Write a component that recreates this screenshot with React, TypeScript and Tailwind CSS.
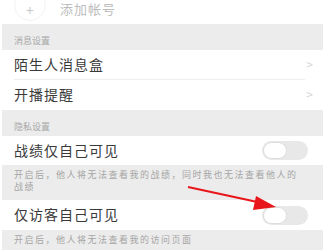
import React from 'react';

const font = { fontFamily: '"Noto Sans CJK SC", "Noto Sans", sans-serif' };

function SectionHeader({ title }: { title: string }) {
  return (
    <div className="mx-[2px] h-[26px] bg-[#ececec] flex items-end pb-[5px] pl-[12px]">
      <span className="text-[9px] leading-none text-[#a8a8a8]">{title}</span>
    </div>
  );
}

function LinkRow({ label, divider }: { label: string; divider?: boolean }) {
  return (
    <div className="h-[30px] flex items-center pl-[14px] pr-[12px] pb-[3px] relative">
      <span className="text-[14px] leading-none text-[#3a3a3a] tracking-[1px]">{label}</span>
      <span className="ml-auto text-[12px] leading-none text-[#d6d6d6]">&gt;</span>
      {divider && <div className="absolute left-[14px] right-[20px] bottom-0 h-px bg-[#eeeeee]" />}
    </div>
  );
}

function Toggle() {
  return (
    <div className="w-[46px] h-[19px] rounded-full bg-[#e8e8e8] flex items-center p-[1px]">
      <div className="w-[24px] h-[17px] rounded-full bg-white border border-[#dcdcdc]" />
    </div>
  );
}

function ToggleRow({ label, h }: { label: string; h: string }) {
  return (
    <div className={`${h} flex items-center pl-[14px] pr-[17px]`}>
      <span className="text-[14px] leading-none text-[#3a3a3a] tracking-[1px] -mt-[2px]">{label}</span>
      <div className="ml-auto">
        <Toggle />
      </div>
    </div>
  );
}

function Note({ children }: { children: React.ReactNode }) {
  return (
    <div className="mx-[2px] bg-[#ececec] pl-[12px] pr-[14px] pt-[4px] pb-[7px] text-[9px] leading-[12px] tracking-[1.5px] text-[#a5a5a5]">
      {children}
    </div>
  );
}

export default function App() {
  return (
    <div className="w-[325px] h-[250px] bg-white overflow-hidden relative" style={font}>
      {/* add account */}
      <div className="h-[24px] flex items-center pl-[14px]">
        <div className="w-[32px] h-[32px] -mt-[14px] rounded-full border border-[#f3f3f3] flex items-center justify-center pt-[10px]">
          <span className="text-[14px] text-[#c8c8c8] leading-none">+</span>
        </div>
        <span className="ml-[14px] -mt-[7px] text-[13px] leading-none text-[#bdbdbd] tracking-[1px]">添加帐号</span>
      </div>

      <SectionHeader title="消息设置" />
      <LinkRow label="陌生人消息盒" divider />
      <LinkRow label="开播提醒" />
      <SectionHeader title="隐私设置" />
      <ToggleRow label="战绩仅自己可见" h="h-[29px]" />
      <Note>
        <div>开启后，他人将无法查看我的战绩，同时我也无法查看他人的</div>
        <div>战绩</div>
      </Note>
      <ToggleRow label="仅访客自己可见" h="h-[30px]" />
      <Note>开启后，他人将无法查看我的访问页面</Note>

      {/* red annotation arrow */}
      <svg className="absolute left-0 top-0" width="325" height="250" viewBox="0 0 325 250">
        <line x1="188" y1="187" x2="262" y2="203" stroke="#e8161b" strokeWidth="2.2" />
        <polygon points="276,207 256,196 253,210" fill="#e8161b" />
      </svg>
    </div>
  );
}
